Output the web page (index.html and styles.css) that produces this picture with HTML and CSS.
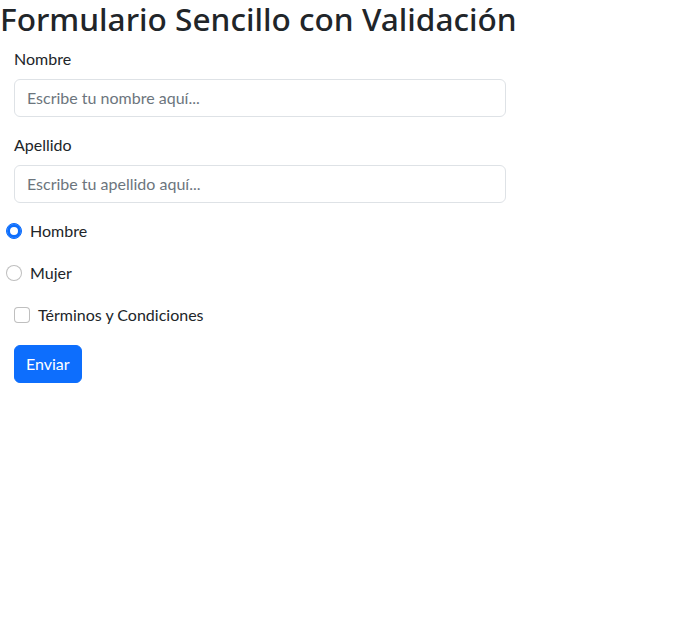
FILE: index.html
```html
<!DOCTYPE html>
<html lang="es">
<head>
<meta charset="utf-8">
<title>Formulario Sencillo con Validación</title>
<link rel="stylesheet" href="styles.css">
</head>
<body>
<h1 class="title">Formulario Sencillo con Validación</h1>
<form class="form">
  <div class="field">
    <label class="label" for="nombre">Nombre</label>
    <input class="input" id="nombre" type="text" placeholder="Escribe tu nombre aquí...">
  </div>
  <div class="field">
    <label class="label" for="apellido">Apellido</label>
    <input class="input" id="apellido" type="text" placeholder="Escribe tu apellido aquí...">
  </div>
  <div class="check radio-check">
    <input class="radio" type="radio" name="sexo" id="hombre" checked>
    <label for="hombre">Hombre</label>
  </div>
  <div class="check radio-check">
    <input class="radio" type="radio" name="sexo" id="mujer">
    <label for="mujer">Mujer</label>
  </div>
  <div class="check">
    <input class="box" type="checkbox" id="terminos">
    <label for="terminos">Términos y Condiciones</label>
  </div>
  <button class="btn" type="submit">Enviar</button>
</form>
</body>
</html>
```
FILE: styles.css
```css
* { box-sizing: border-box; }
body {
  margin: 0;
  font-family: Lato, "Noto Sans", sans-serif;
  font-size: 16px;
  line-height: 24px;
  color: #212529;
  background: #fff;
}
.title {
  margin: 0 0 8px;
  font-family: "Noto Sans", sans-serif;
  font-size: 31.6px;
  font-weight: 500;
  line-height: 38.6px;
}
.form {
  padding: 0 14px;
}
.field {
  margin-bottom: 16px;
}
.label {
  display: block;
  margin-bottom: 8px;
}
.input {
  display: block;
  width: 492px;
  height: 38px;
  padding: 6px 12px;
  font: inherit;
  color: #212529;
  border: 1px solid #dee2e6;
  border-radius: 6px;
  background: #fff;
  outline: none;
}
.input::placeholder {
  color: #6c757d;
  opacity: 1;
}
.check {
  display: flex;
  align-items: center;
  gap: 8px;
  height: 24px;
  margin-bottom: 18px;
}
.radio-check {
  margin-left: -8px;
}
.radio, .box {
  appearance: none;
  -webkit-appearance: none;
  margin: 0;
  width: 16px;
  height: 16px;
  border: 1px solid rgba(0,0,0,.25);
  background: #fff;
  flex: none;
}
.radio {
  border-radius: 50%;
}
.radio:checked {
  background: #0d6efd;
  border-color: #0d6efd;
  box-shadow: inset 0 0 0 3px #0d6efd, inset 0 0 0 8px #fff;
}
.box {
  border-radius: 4px;
}
.btn {
  display: inline-block;
  height: 38px;
  padding: 6px 11px;
  font: inherit;
  color: #fff;
  background: #0d6efd;
  border: 1px solid #0d6efd;
  border-radius: 6px;
}
```
